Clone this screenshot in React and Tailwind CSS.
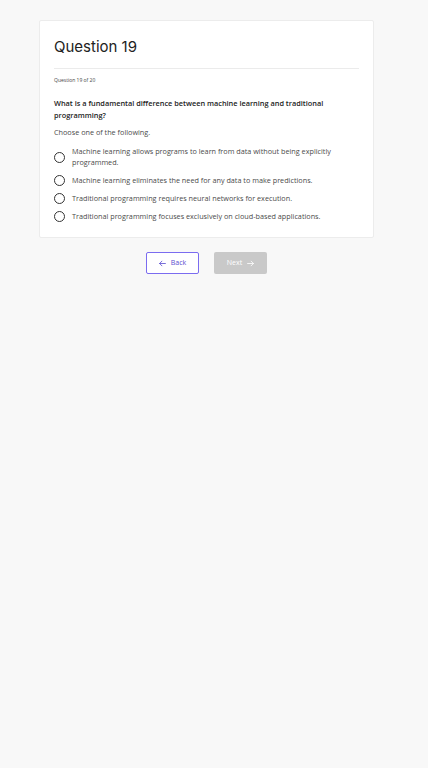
import React, { useState } from 'react';

const options = [
  'Machine learning allows programs to learn from data without being explicitly programmed.',
  'Machine learning eliminates the need for any data to make predictions.',
  'Traditional programming requires neural networks for execution.',
  'Traditional programming focuses exclusively on cloud-based applications.',
];

function Arrow({ dir }) {
  const d = dir === 'left' ? 'M11 6H1M5 2L1 6l4 4' : 'M1 6h10M7 2l4 4-4 4';
  return (
    <svg width="7" height="7" viewBox="0 0 12 12" fill="none" stroke="currentColor" strokeWidth="1.4" strokeLinecap="round" strokeLinejoin="round">
      <path d={d} />
    </svg>
  );
}

function Radio({ label, checked, onSelect }) {
  return (
    <label className="flex items-center gap-[7px] cursor-pointer" onClick={onSelect}>
      <span className="shrink-0 w-[11px] h-[11px] rounded-full border-[1.3px] border-[#333] bg-white flex items-center justify-center">
        {checked && <span className="w-[5px] h-[5px] rounded-full bg-[#333]" />}
      </span>
      <span className="text-[7.25px] leading-[11px] text-[#4a4a4a]">{label}</span>
    </label>
  );
}

export default function App() {
  const [selected, setSelected] = useState(null);

  return (
    <div className="min-h-[768px] bg-[#f8f8f8] pt-[20px]" style={{ fontFamily: '"Open Sans", sans-serif' }}>
      <div className="ml-[39px] w-[335px]">
        <div className="bg-white border border-[#ececec] rounded-[2px] px-[14px] pt-[15px] pb-[15px]">
          <h1 className="text-[15px] leading-[22px] text-[#222]" style={{ fontFamily: 'Inter, sans-serif' }}>
            Question 19
          </h1>
          <div className="mt-[10px] h-px bg-[#ebebeb]" />
          <p className="mt-[7px] text-[5px] leading-[8px] text-[#444]">Question 19 of 20</p>
          <p className="mt-[13px] text-[7.35px] leading-[12px] font-semibold text-[#222]">
            What is a fundamental difference between machine learning and traditional programming?
          </p>
          <p className="mt-[6px] text-[7.25px] leading-[11px] text-[#4a4a4a]">Choose one of the following.</p>
          <div className="mt-[8px] flex flex-col gap-[7px]">
            {options.map((o, i) => (
              <Radio key={i} label={o} checked={selected === i} onSelect={() => setSelected(i)} />
            ))}
          </div>
        </div>

        <div className="mt-[14px] flex justify-center gap-[15px]">
          <button className="w-[53px] h-[22px] border-[1.3px] border-[#7b6cf0] rounded-[2px] bg-white text-[#5b4ed0] text-[7px] flex items-center justify-center gap-[5px]">
            <Arrow dir="left" />
            <span>Back</span>
          </button>
          <button disabled className="w-[53px] h-[22px] rounded-[2px] bg-[#c9c9c9] text-white text-[7px] flex items-center justify-center gap-[5px]">
            <span>Next</span>
            <Arrow dir="right" />
          </button>
        </div>
      </div>
    </div>
  );
}
